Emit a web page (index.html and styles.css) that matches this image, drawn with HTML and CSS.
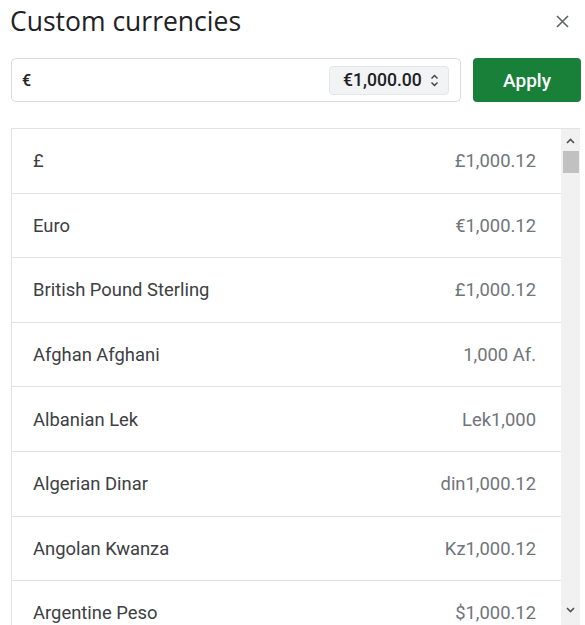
FILE: index.html
```html
<!DOCTYPE html>
<html>
<head>
<meta charset="utf-8">
<link rel="stylesheet" href="styles.css">
</head>
<body>
<div class="dialog">
  <header class="head">
    <h1 class="title">Custom currencies</h1>
    <button class="close" aria-label="Close">
      <svg width="13" height="13" viewBox="0 0 13 13"><path d="M1 1L12 12M12 1L1 12" stroke="#5f6368" stroke-width="1.6" fill="none"/></svg>
    </button>
  </header>
  <div class="controls">
    <div class="field">
      <span class="symbol">€</span>
      <div class="format">
        <span>€1,000.00</span>
        <svg class="updown" width="9" height="15" viewBox="0 0 9 15"><path d="M1.5 5.5L4.5 2.5L7.5 5.5M1.5 9.5L4.5 12.5L7.5 9.5" stroke="#3c4043" stroke-width="1.4" fill="none"/></svg>
      </div>
    </div>
    <button class="apply">Apply</button>
  </div>
  <div class="list">
    <div class="rows">
      <div class="row"><span class="name">£</span><span class="value">£1,000.12</span></div>
      <div class="row"><span class="name">Euro</span><span class="value">€1,000.12</span></div>
      <div class="row"><span class="name">British Pound Sterling</span><span class="value">£1,000.12</span></div>
      <div class="row"><span class="name">Afghan Afghani</span><span class="value">1,000 Af.</span></div>
      <div class="row"><span class="name">Albanian Lek</span><span class="value">Lek1,000</span></div>
      <div class="row"><span class="name">Algerian Dinar</span><span class="value">din1,000.12</span></div>
      <div class="row"><span class="name">Angolan Kwanza</span><span class="value">Kz1,000.12</span></div>
      <div class="row"><span class="name">Argentine Peso</span><span class="value">$1,000.12</span></div>
    </div>
    <div class="scrollbar">
      <svg class="arrow" width="9" height="6" viewBox="0 0 9 6"><path d="M1 5L4.5 1.5L8 5" stroke="#505050" stroke-width="1.6" fill="none"/></svg>
      <div class="thumb"></div>
      <div class="track"></div>
      <svg class="arrow" width="9" height="6" viewBox="0 0 9 6"><path d="M1 1L4.5 4.5L8 1" stroke="#505050" stroke-width="1.6" fill="none"/></svg>
    </div>
  </div>
</div>
</body>
</html>
```
FILE: styles.css
```css
html, body {
  margin: 0;
  padding: 0;
  background: #ffffff;
  overflow: hidden;
}
body {
  width: 585px;
  height: 625px;
  font-family: Roboto, "Liberation Sans", Arial, sans-serif;
  color: #3c4043;
}
.dialog {
  padding: 0 4px 0 11px;
}
.head {
  display: flex;
  align-items: center;
  justify-content: space-between;
  height: 42px;
}
.title {
  margin: 0 0 0 -1px;
  font-family: "Open Sans", Roboto, sans-serif;
  font-weight: 400;
  font-size: 26.5px;
  color: #202124;
  letter-spacing: 0;
}
.close {
  border: 0;
  background: none;
  padding: 0;
  margin-right: 12px;
  width: 13px;
  height: 13px;
  display: flex;
}
.controls {
  display: flex;
  gap: 12px;
  margin-top: 16px;
}
.field {
  flex: 0 0 450px;
  box-sizing: border-box;
  height: 44px;
  border: 1px solid #dadce0;
  border-radius: 5px;
  display: flex;
  align-items: center;
  justify-content: space-between;
  padding: 0 11px 0 10px;
}
.symbol {
  font-size: 16px;
  font-weight: 500;
  color: #202124;
}
.format {
  display: flex;
  align-items: center;
  gap: 8px;
  box-sizing: border-box;
  width: 120px;
  height: 29px;
  padding: 0 8px 0 13px;
  background: #f1f3f4;
  border: 1px solid #e3e5e8;
  border-radius: 4px;
  font-size: 17.6px;
  font-weight: 500;
  color: #202124;
  white-space: nowrap;
}
.apply {
  flex: 0 0 108px;
  height: 44px;
  border: 0;
  border-radius: 4px;
  background: #188038;
  color: #ffffff;
  font-family: Roboto, sans-serif;
  font-size: 19px;
  font-weight: 500;
  padding: 0;
}
.list {
  margin-top: 26px;
  display: flex;
  border-top: 1px solid #e3e3e3;
  border-left: 1px solid #e3e3e3;
  width: 569px;
  box-sizing: border-box;
}
.rows {
  flex: 1;
}
.row {
  box-sizing: border-box;
  height: 64.6px;
  border-bottom: 1px solid #e3e3e3;
  display: flex;
  align-items: center;
  justify-content: space-between;
  padding: 0 25px 0 21px;
  font-size: 18.4px;
}
.name {
  color: #3c4043;
}
.value {
  color: #70757a;
}
.scrollbar {
  flex: 0 0 19px;
  background: #f1f1f1;
  display: flex;
  flex-direction: column;
  align-items: center;
  padding-top: 9px;
}
.arrow {
  flex: none;
}
.thumb {
  width: 16px;
  height: 22px;
  background: #c1c1c1;
  margin-top: 7px;
}
.track {
  height: 434px;
}
```
